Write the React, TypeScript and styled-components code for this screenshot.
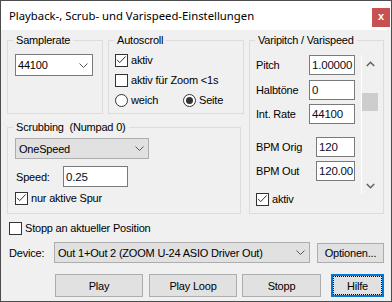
import React from 'react';
import styled, { createGlobalStyle } from 'styled-components';

const GlobalStyle = createGlobalStyle`
  html, body { margin: 0; padding: 0; background: #f0f0f0; }
  * { box-sizing: border-box; }
`;

const Window = styled.div`
  width: 392px;
  height: 302px;
  border: 1px solid #4d4d4d;
  display: flex;
  flex-direction: column;
  background: #f0f0f0;
  font-family: "Liberation Sans", Arial, sans-serif;
  font-size: 11px;
  letter-spacing: -0.2px;
  color: #000;
  overflow: hidden;
`;

const TitleBar = styled.div`
  height: 29px;
  flex: none;
  background: #fff;
  display: flex;
  align-items: flex-start;
  justify-content: space-between;
  padding: 0 1px 0 8px;
`;

const Title = styled.div`
  font-family: "Noto Sans", "Open Sans", sans-serif;
  font-size: 11.3px;
  letter-spacing: 0;
  line-height: 29px;
  color: #000;
`;

const CloseButton = styled.div`
  margin-top: 7px;
  width: 18px;
  height: 19px;
  background: #c75050;
  color: #fff;
  display: flex;
  align-items: center;
  justify-content: center;
  font-weight: bold;
  font-size: 11px;
  line-height: 1;
  padding-bottom: 2px;
`;

const Body = styled.div`
  flex: 1;
  display: flex;
  flex-direction: column;
  padding: 4px 7px 0 6px;
`;

const TopGrid = styled.div`
  display: grid;
  grid-template-columns: 237px 135px;
  column-gap: 5px;
`;

const LeftCol = styled.div`
  display: flex;
  flex-direction: column;
  gap: 7px;
`;

const TopRow = styled.div`
  display: flex;
  gap: 5px;
`;

const Group = styled.fieldset<{ $w: number; $h: number }>`
  width: ${(p) => p.$w}px;
  height: ${(p) => p.$h}px;
  margin: 0;
  padding: 0;
  min-width: 0;
  border: 1px solid #dcdcdc;
`;

const Legend = styled.legend`
  margin-left: 5px;
  padding: 0 3px;
  line-height: 13px;
  font-size: 11px;
  white-space: pre;
`;

const GroupBody = styled.div<{ $pt: number; $pl: number }>`
  padding: ${(p) => p.$pt}px 0 0 ${(p) => p.$pl}px;
`;

const VariBody = styled.div`
  display: flex;
  padding: 8px 0 0 6px;
`;

const ComboBase = styled.div<{ $w: number; $h: number }>`
  width: ${(p) => p.$w}px;
  height: ${(p) => p.$h}px;
  display: flex;
  align-items: center;
  justify-content: space-between;
  padding: 0 4px 0 3px;
  white-space: nowrap;
  overflow: hidden;
`;

const ComboEdit = styled(ComboBase)`
  background: #fff;
  border: 1px solid #7a7a7a;
  padding-left: 2px;
`;

const ComboList = styled(ComboBase)`
  background: #e1e1e1;
  border: 1px solid #adadad;
`;

const Chevron = () => (
  <svg width="9" height="5" viewBox="0 0 9 5">
    <path d="M0.5 0.5 L4.5 4.5 L8.5 0.5" stroke="#555" strokeWidth="1" fill="none" />
  </svg>
);

const CheckRow = styled.div<{ $mt?: number; $ml?: number }>`
  height: 20px;
  display: flex;
  align-items: center;
  gap: 3px;
  margin-top: ${(p) => p.$mt ?? 0}px;
  margin-left: ${(p) => p.$ml ?? 0}px;
  white-space: nowrap;
`;

const Box = styled.span`
  width: 13px;
  height: 13px;
  flex: none;
  border: 1px solid #333;
  background: #fff;
  display: inline-flex;
  align-items: center;
  justify-content: center;
`;

const Check = ({ checked }: { checked?: boolean }) => (
  <Box>
    {checked && (
      <svg width="11" height="11" viewBox="0 0 11 11">
        <path d="M1 4.8 L3.7 7.6 L9.7 1.4" stroke="#333" strokeWidth="1" fill="none" />
      </svg>
    )}
  </Box>
);

const RadioCircle = styled.span`
  width: 13px;
  height: 13px;
  flex: none;
  border: 1px solid #333;
  border-radius: 50%;
  background: #fff;
  display: inline-flex;
  align-items: center;
  justify-content: center;
`;

const RadioDot = styled.span`
  width: 7px;
  height: 7px;
  border-radius: 50%;
  background: #333;
`;

const RadioRow = styled.div`
  display: flex;
`;

const RadioItem = styled(CheckRow)<{ $w?: number }>`
  width: ${(p) => (p.$w ? `${p.$w}px` : 'auto')};
`;

const Radio = ({ checked }: { checked?: boolean }) => (
  <RadioCircle>{checked && <RadioDot />}</RadioCircle>
);

const FieldRow = styled.div<{ $mt?: number }>`
  display: flex;
  align-items: center;
  margin-top: ${(p) => p.$mt ?? 0}px;
`;

const Label = styled.span<{ $w: number; $ml?: number }>`
  width: ${(p) => p.$w}px;
  margin-left: ${(p) => p.$ml ?? 0}px;
  flex: none;
  white-space: nowrap;
`;

const TextBox = styled.div<{ $w: number; $h?: number }>`
  width: ${(p) => p.$w}px;
  height: ${(p) => p.$h ?? 20}px;
  flex: none;
  background: #fff;
  border: 1px solid #7a7a7a;
  display: flex;
  align-items: center;
  padding-left: 2px;
  overflow: hidden;
  white-space: nowrap;
  font-size: 11.5px;
  color: #0c0c1c;
`;

const FormCol = styled.div`
  width: 99px;
  display: flex;
  flex-direction: column;
`;

const ScrollBar = styled.div`
  margin-left: 6px;
  width: 17px;
  height: 139px;
  border-left: 1px solid #fff;
  display: flex;
  flex-direction: column;
`;

const ScrollArrow = styled.div`
  height: 17px;
  display: flex;
  align-items: center;
  justify-content: center;
  flex: none;
`;

const ScrollTrack = styled.div`
  flex: 1;
`;

const Thumb = styled.div`
  margin-top: 21px;
  height: 18px;
  background: #cdcdcd;
`;

const ArrowIcon = ({ up }: { up?: boolean }) => (
  <svg width="9" height="6" viewBox="0 0 9 6">
    <path
      d={up ? 'M0.8 5 L4.5 1.3 L8.2 5' : 'M0.8 1 L4.5 4.7 L8.2 1'}
      stroke="#606060"
      strokeWidth="1.5"
      fill="none"
    />
  </svg>
);

const DeviceRow = styled.div`
  margin-top: 4px;
  padding-left: 2px;
  display: flex;
  align-items: center;
  height: 21px;
`;

const Button = styled.div<{ $w: number; $h?: number; $ml?: number; $focus?: boolean }>`
  width: ${(p) => p.$w}px;
  height: ${(p) => p.$h ?? 23}px;
  margin-left: ${(p) => p.$ml ?? 0}px;
  flex: none;
  background: #e1e1e1;
  border: ${(p) => (p.$focus ? '2px solid #0078d7' : '1px solid #adadad')};
  display: flex;
  align-items: center;
  justify-content: center;
  white-space: nowrap;
  outline: ${(p) => (p.$focus ? '1px dotted #000' : 'none')};
  outline-offset: -3px;
`;

const ButtonRow = styled.div`
  margin-top: 11px;
  display: flex;
  padding-left: 48px;
`;

export default function App() {
  return (
    <>
      <GlobalStyle />
      <Window>
        <TitleBar>
          <Title>Playback-, Scrub- und Varispeed-Einstellungen</Title>
          <CloseButton>x</CloseButton>
        </TitleBar>
        <Body>
          <TopGrid>
            <LeftCol>
              <TopRow>
                <Group $w={96} $h={80}>
                  <Legend>Samplerate</Legend>
                  <GroupBody $pt={7} $pl={7}>
                    <ComboEdit $w={78} $h={22}>
                      <span>44100</span>
                      <Chevron />
                    </ComboEdit>
                  </GroupBody>
                </Group>
                <Group $w={136} $h={80}>
                  <Legend>Autoscroll</Legend>
                  <GroupBody $pt={3} $pl={6}>
                    <CheckRow>
                      <Check checked />
                      <span>aktiv</span>
                    </CheckRow>
                    <CheckRow>
                      <Check />
                      <span>aktiv für Zoom &lt;1s</span>
                    </CheckRow>
                    <RadioRow>
                      <RadioItem $w={68}>
                        <Radio />
                        <span>weich</span>
                      </RadioItem>
                      <RadioItem>
                        <Radio checked />
                        <span>Seite</span>
                      </RadioItem>
                    </RadioRow>
                  </GroupBody>
                </Group>
              </TopRow>
              <Group $w={234} $h={93}>
                <Legend>{'Scrubbing  (Numpad 0)'}</Legend>
                <GroupBody $pt={4} $pl={7}>
                  <ComboList $w={134} $h={21}>
                    <span>OneSpeed</span>
                    <Chevron />
                  </ComboList>
                  <FieldRow $mt={7}>
                    <Label $w={47} $ml={1}>Speed:</Label>
                    <TextBox $w={65} $h={21}>0.25</TextBox>
                  </FieldRow>
                  <CheckRow $mt={1}>
                    <Check checked />
                    <span>nur aktive Spur</span>
                  </CheckRow>
                </GroupBody>
              </Group>
            </LeftCol>
            <Group $w={135} $h={180}>
              <Legend>Varipitch / Varispeed</Legend>
              <VariBody>
                <FormCol>
                  <FieldRow>
                    <Label $w={53}>Pitch</Label>
                    <TextBox $w={46}>1.00000</TextBox>
                  </FieldRow>
                  <FieldRow $mt={5}>
                    <Label $w={53}>Halbtöne</Label>
                    <TextBox $w={46}>0</TextBox>
                  </FieldRow>
                  <FieldRow $mt={4}>
                    <Label $w={53}>Int. Rate</Label>
                    <TextBox $w={46}>44100</TextBox>
                  </FieldRow>
                  <FieldRow $mt={13}>
                    <Label $w={60}>BPM Orig</Label>
                    <TextBox $w={39}>120</TextBox>
                  </FieldRow>
                  <FieldRow $mt={4}>
                    <Label $w={60}>BPM Out</Label>
                    <TextBox $w={39}>120.00</TextBox>
                  </FieldRow>
                  <CheckRow $mt={8}>
                    <Check checked />
                    <span>aktiv</span>
                  </CheckRow>
                </FormCol>
                <ScrollBar>
                  <ScrollArrow>
                    <ArrowIcon up />
                  </ScrollArrow>
                  <ScrollTrack>
                    <Thumb />
                  </ScrollTrack>
                  <ScrollArrow>
                    <ArrowIcon />
                  </ScrollArrow>
                </ScrollBar>
              </VariBody>
            </Group>
          </TopGrid>
          <CheckRow $mt={4} $ml={2}>
            <Check />
            <span>Stopp an aktueller Position</span>
          </CheckRow>
          <DeviceRow>
            <Label $w={45}>Device:</Label>
            <ComboList $w={256} $h={21}>
              <span>Out 1+Out 2 (ZOOM U-24 ASIO Driver Out)</span>
              <Chevron />
            </ComboList>
            <Button $w={67} $h={20} $ml={7}>Optionen...</Button>
          </DeviceRow>
          <ButtonRow>
            <Button $w={88}>Play</Button>
            <Button $w={88} $ml={6}>Play Loop</Button>
            <Button $w={79} $ml={5}>Stopp</Button>
            <Button $w={53} $ml={10} $focus>Hilfe</Button>
          </ButtonRow>
        </Body>
      </Window>
    </>
  );
}
